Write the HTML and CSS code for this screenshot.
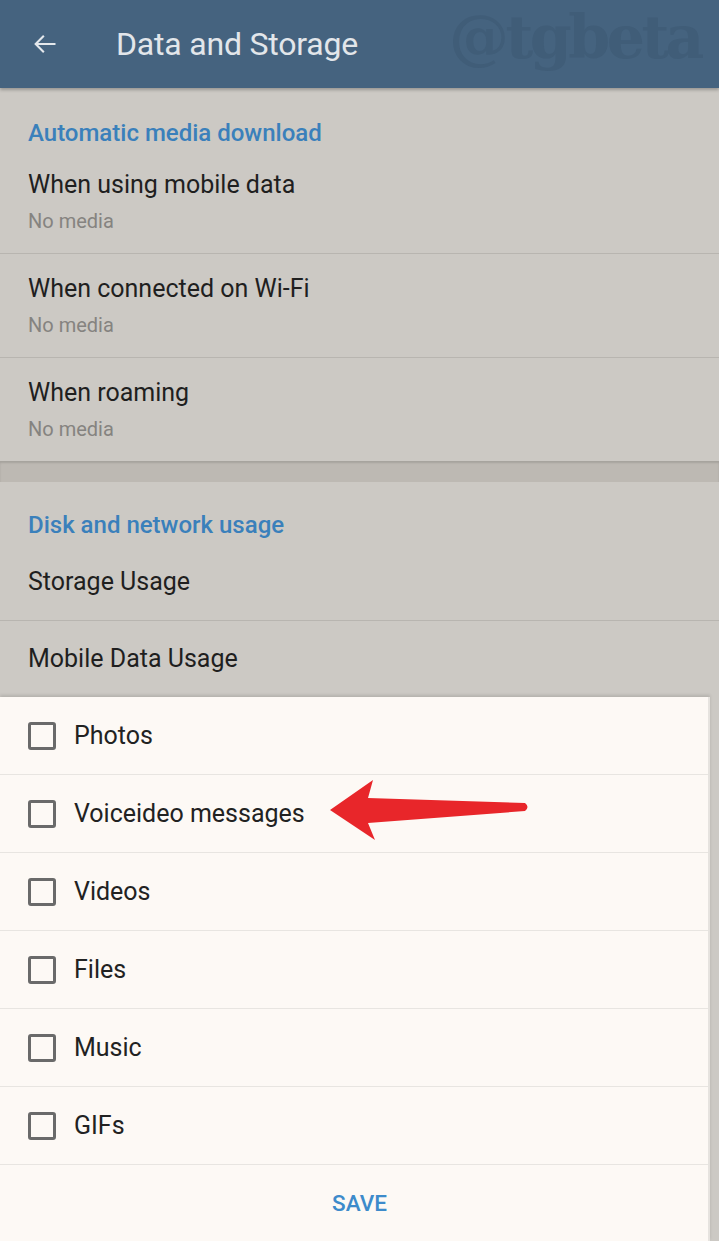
FILE: index.html
```html
<!DOCTYPE html>
<html lang="en">
<head>
    <meta charset="UTF-8">
    <meta name="viewport" content="width=device-width, initial-scale=1.0">
    <title>Data and Storage</title>
    <link rel="stylesheet" href="styles.css">
</head>
<body>

    <div class="screen">
        <div class="toolbar">
            <svg class="back" width="28" height="28" viewBox="0 0 24 24">
                <path d="M21 12H4M11 5l-7 7 7 7" fill="none" stroke="#e4e8ec" stroke-width="1.8"/>
            </svg>
            <div class="title">Data and Storage</div>
            <div class="watermark">@tgbeta</div>
        </div>

        <div class="section">
            <div class="section-title">Automatic media download</div>
            <div class="row">
                <div class="row-title">When using mobile data</div>
                <div class="row-sub">No media</div>
            </div>
            <div class="row">
                <div class="row-title">When connected on Wi-Fi</div>
                <div class="row-sub">No media</div>
            </div>
            <div class="row last">
                <div class="row-title">When roaming</div>
                <div class="row-sub">No media</div>
            </div>
        </div>

        <div class="gap"></div>

        <div class="section">
            <div class="section-title second">Disk and network usage</div>
            <div class="row single">Storage Usage</div>
            <div class="row single last">Mobile Data Usage</div>
        </div>

        <!-- диалог выбора типов медиа -->
        <div class="sheet">
            <div class="check-row"><span class="box"></span>Photos</div>
            <div class="check-row">
                <span class="box"></span>Voiceideo messages
                <svg class="pointer" width="210" height="70" viewBox="0 0 210 70">
                    <path d="M0 31 L43 1 L38 19 L195 24 Q200 28 195 32 L38 44 L45 61 Z" fill="#e8262a"/>
                </svg>
            </div>
            <div class="check-row"><span class="box"></span>Videos</div>
            <div class="check-row"><span class="box"></span>Files</div>
            <div class="check-row"><span class="box"></span>Music</div>
            <div class="check-row"><span class="box"></span>GIFs</div>
            <div class="save">SAVE</div>
        </div>
    </div>

</body>
</html>
```

FILE: styles.css
```css
body {
    margin: 0;
    padding: 0;
    font-family: Roboto, "Liberation Sans", sans-serif;
    background-color: #ccc9c4;
}
.screen {
    width: 719px;
    height: 1241px;
    overflow: hidden;
    background-color: #ccc9c4;
}
.toolbar {
    position: relative;
    display: flex;
    align-items: center;
    height: 88px;
    background-color: #45637f;
    box-shadow: 0 2px 3px rgba(0, 0, 0, 0.25);
    z-index: 2;
}
.toolbar .back {
    margin-left: 31px;
    margin-right: 57px;
}
.toolbar .title {
    color: #e2e6ea;
    font-size: 32px;
    letter-spacing: -0.2px;
}
.watermark {
    position: absolute;
    right: 18px;
    top: 2px;
    font-family: "DejaVu Serif", serif;
    font-weight: bold;
    font-size: 60px;
    letter-spacing: -3.5px;
    color: #405d78;
}
.section {
    background-color: #ccc9c4;
}
.section-title {
    padding: 30px 28px 2px;
    line-height: 30px;
    font-size: 24px;
    font-weight: 500;
    color: #3a80bb;
}
.section-title.second {
    padding-top: 28px;
    padding-bottom: 4px;
}
.row {
    padding: 20px 28px 20px;
    border-bottom: 1px solid #b8b5b0;
    color: #1f1f1f;
}
.row.last {
    border-bottom: none;
}
.row-title {
    font-size: 25px;
    line-height: 30px;
}
.row-sub {
    margin-top: 9px;
    font-size: 20px;
    line-height: 24px;
    color: #858380;
}
.row.single {
    padding: 0 28px;
    height: 76px;
    line-height: 76px;
    font-size: 25px;
}
.gap {
    height: 21px;
    background-color: #bdb9b3;
    box-shadow: inset 0 2px 2px rgba(0, 0, 0, 0.12);
}
.sheet {
    position: relative;
    width: 708px;
    background-color: #fdf9f5;
    border-right: 2px solid #e6e3df;
    box-shadow: 0 -2px 3px rgba(0, 0, 0, 0.12);
}
.check-row {
    position: relative;
    display: flex;
    align-items: center;
    height: 77px;
    border-bottom: 1px solid #e8e5e1;
    font-size: 25px;
    color: #222;
}
.box {
    width: 22px;
    height: 22px;
    margin-left: 28px;
    margin-right: 18px;
    border: 3px solid #6a6a6a;
    border-radius: 3px;
}
.pointer {
    position: absolute;
    left: 330px;
    top: 4px;
}
.save {
    height: 76px;
    padding-left: 11px;
    line-height: 76px;
    text-align: center;
    font-size: 22.5px;
    font-weight: 500;
    color: #3d8bcb;
}
```
